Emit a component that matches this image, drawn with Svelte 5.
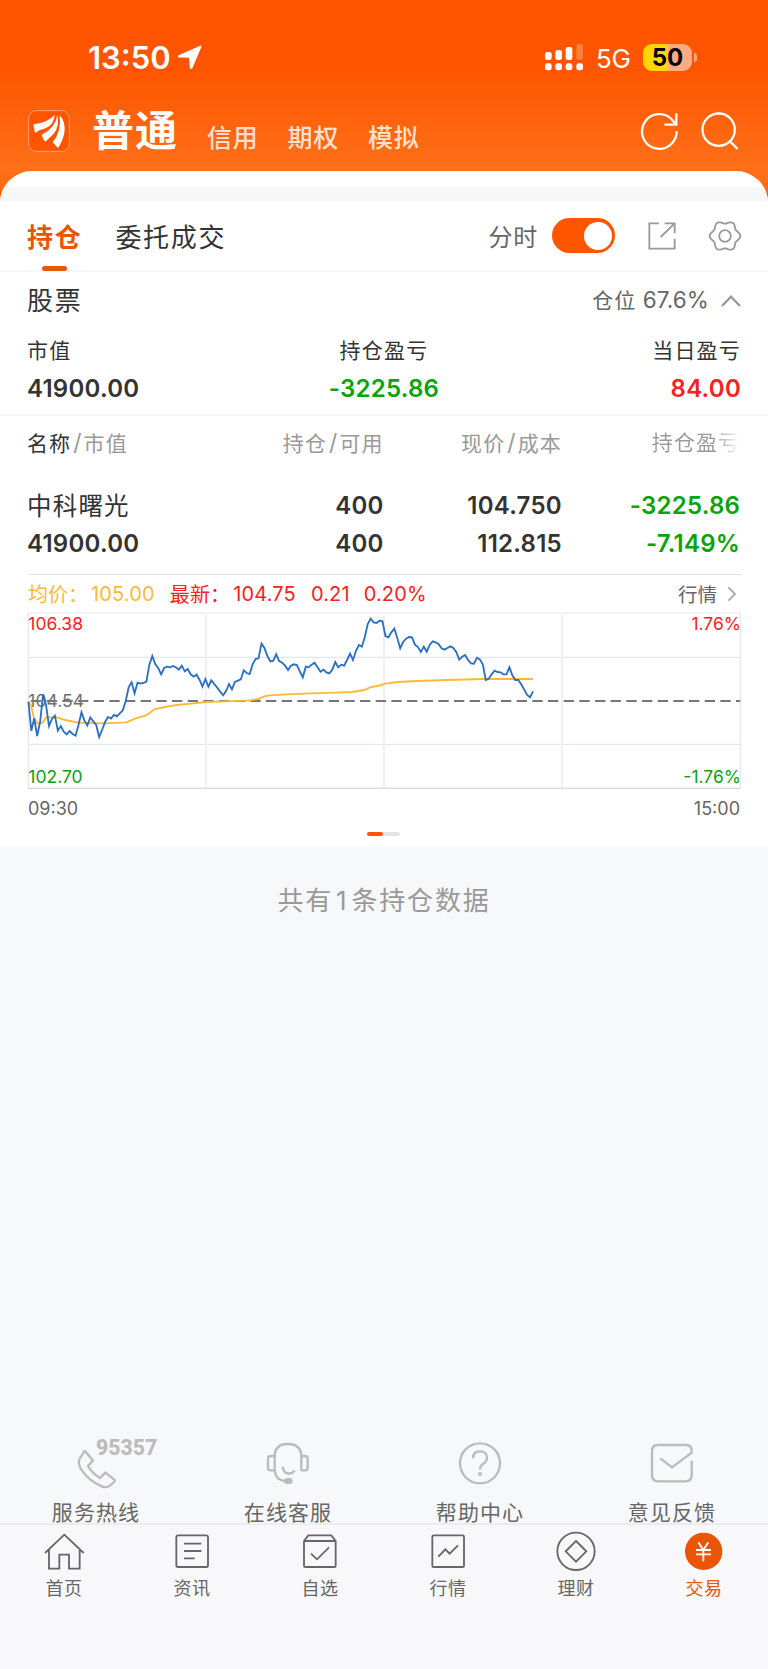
<script>
  // 顶部账户类型
  const accounts = ['信用', '期权', '模拟'];

  // 资产汇总
  const summary = [
    { label: '市值', value: '41900.00', tone: '' },
    { label: '持仓盈亏', value: '-3225.86', tone: 'down' },
    { label: '当日盈亏', value: '84.00', tone: 'up' },
  ];

  // 分时数据：每分钟一个点，数值为图内纵坐标
  const prices = [
    305, 392, 355, 408, 365, 283, 315, 378, 357, 347, 392, 378, 395, 403, 393, 402, 407, 375, 337,
    362, 376, 352, 364, 375, 411, 390, 366, 351, 356, 345, 349, 340, 331, 303, 262, 247, 280, 248,
    251, 249, 245, 194, 168, 192, 204, 223, 204, 200, 202, 198, 202, 209, 197, 214, 207, 223, 230,
    224, 239, 260, 237, 260, 241, 252, 263, 275, 286, 273, 252, 268, 246, 242, 238, 211, 219, 222,
    193, 177, 175, 131, 144, 168, 184, 182, 163, 183, 188, 197, 210, 197, 193, 195,
    214, 232, 200, 202, 194, 188, 202, 215, 209, 217, 220, 209, 186, 202, 194, 197, 180, 161, 180,
    153, 135, 140, 112, 72, 56, 67, 69, 62, 64, 108, 112, 97, 86, 113, 145, 126, 116, 111, 112,
    134, 141, 156, 140, 155, 135, 124, 127, 132, 145, 149, 144, 139, 144, 156, 179, 170, 165, 180,
    190, 191, 173, 178, 193, 240, 236, 223, 212, 216, 217, 223, 223, 202, 226, 240, 240, 253, 268,
    285, 292, 274,
  ];
  const step = (1539 - 25) / (prices.length - 1);
  const priceLine = prices.map((y, i) => `${(25 + i * step).toFixed(1)},${y}`).join(' ');

  // 均价线
  const average = [
    [27, 305], [34, 320], [42, 355], [52, 370], [65, 370], [72, 362], [78, 352], [112, 352],
    [135, 360], [165, 366], [180, 368], [250, 370], [320, 367], [345, 356], [378, 346], [405, 327],
    [435, 321], [470, 315], [520, 310], [560, 306], [620, 304], [690, 301], [715, 297], [732, 289],
    [750, 286], [800, 283], [870, 280], [950, 278], [995, 276], [1033, 270], [1050, 262],
    [1085, 255], [1095, 251], [1135, 246], [1190, 243], [1280, 240], [1390, 237], [1539, 237],
  ];
  const averageLine = average.map((p) => p.join(',')).join(' ');

  // 设置图标的齿轮轮廓
  const gear = Array.from({ length: 72 }, (_, i) => {
    const a = (i * Math.PI) / 36;
    const r = 41.5 + 4.5 * Math.cos(6 * a);
    return `${(48 + r * Math.cos(a)).toFixed(1)},${(48 + r * Math.sin(a)).toFixed(1)}`;
  }).join(' ');

  const services = [
    { icon: 'phone', label: '服务热线' },
    { icon: 'headset', label: '在线客服' },
    { icon: 'help', label: '帮助中心' },
    { icon: 'mail', label: '意见反馈' },
  ];

  const tabs = [
    { icon: 'home', label: '首页' },
    { icon: 'news', label: '资讯' },
    { icon: 'pick', label: '自选' },
    { icon: 'market', label: '行情' },
    { icon: 'wealth', label: '理财' },
    { icon: 'trade', label: '交易' },
  ];
</script>

<div class="app">
  <header>
    <div class="status">
      <span class="clock">13:50</span>
      <svg class="locate" viewBox="0 0 76 76"><path d="M70 2Q75 0 74 6L47 70Q42 77 39 69L37 41Q37 39 35 39L8 38Q-2 36 5 31Z" /></svg>
      <span class="space"></span>
      <svg class="signal" viewBox="0 0 114 81">
        <rect x="0" y="24" width="20" height="24" rx="7" />
        <rect x="31" y="18" width="20" height="30" rx="7" />
        <rect x="62" y="9" width="20" height="39" rx="7" />
        <rect x="94" y="0" width="20" height="48" rx="7" opacity=".25" />
        <rect x="0" y="58" width="20" height="21" rx="7" />
        <rect x="31" y="58" width="20" height="21" rx="7" />
        <rect x="62" y="58" width="20" height="21" rx="7" />
        <rect x="94" y="58" width="20" height="21" rx="7" />
      </svg>
      <span class="network">5G</span>
      <span class="battery">50</span>
      <span class="battery-cap"></span>
    </div>
    <nav class="accounts">
      <svg class="logo" viewBox="0 0 126 126">
        <rect x="2" y="2" width="122" height="122" rx="23" />
        <path d="M80 14Q60 38 16 43L21 69Q34 59 53 55Q78 44 80 14Z" />
        <path d="M88 15Q83 54 41 74Q44 86 52 95L76 73Q96 49 88 15Z" />
        <path d="M95 16Q101 65 74 97L90 114Q103 96 109 70Q114 36 95 16Z" />
      </svg>
      <h1>普通</h1>
      {#each accounts as account}
        <span class="account">{account}</span>
      {/each}
      <span class="space"></span>
      <svg class="refresh" viewBox="0 0 114 114"><path d="M107 57A52 52 0 1 1 94 24L106 38M106 4V38H70" /></svg>
      <svg class="search" viewBox="0 0 114 114"><circle cx="53" cy="53" r="48.5" /><path d="M86 87L110 111" /></svg>
    </nav>
  </header>

  <main>
    <div class="strip"></div>
    <section class="toolbar">
      <span class="tab active">持仓</span>
      <span class="tab">委托成交</span>
      <span class="space"></span>
      <span class="minute">分时</span>
      <span class="switch"><i></i></span>
      <svg class="share" viewBox="0 0 84 84"><path d="M33 4H4V80H80V50M50 4H80V34M80 4L38 45" /></svg>
      <svg class="gear" viewBox="0 0 96 96"><polygon points={gear} /><circle cx="48" cy="48" r="17.5" /></svg>
    </section>

    <section class="stock">
      <div class="stock-head">
        <span class="title">股票</span>
        <span class="ratio">仓位 <b>67.6%</b></span>
        <svg class="chevron" viewBox="0 0 60 36"><path d="M3 33L30 5L57 33" /></svg>
      </div>
      <div class="summary">
        {#each summary as item}
          <div>
            <span class="label">{item.label}</span>
            <span class="num {item.tone}">{item.value}</span>
          </div>
        {/each}
      </div>
    </section>

    <section class="holding">
      <div class="grid head">
        <span><em>名称</em><i>/</i>市值</span>
        <span>持仓<i>/</i>可用</span>
        <span>现价<i>/</i>成本</span>
        <span class="fade">持仓盈亏</span>
      </div>
      <div class="grid row">
        <span class="name">中科曙光</span>
        <span class="num">400</span>
        <span class="num">104.750</span>
        <span class="num down">-3225.86</span>
      </div>
      <div class="grid row">
        <span class="num">41900.00</span>
        <span class="num">400</span>
        <span class="num">112.815</span>
        <span class="num down">-7.149%</span>
      </div>
    </section>

    <section class="minute-chart">
      <div class="legend">
        <span class="avg">均价：</span><span class="avg value">105.00</span>
        <span class="latest">最新：</span><span class="latest value">104.75</span>
        <span class="latest diff">0.21</span><span class="latest">0.20%</span>
        <span class="space"></span>
        <span class="more">行情</span>
        <svg class="arrow" viewBox="0 0 30 48"><path d="M4 4L24 24L4 44" /></svg>
      </div>
      <svg class="chart" viewBox="24 36 2142 534">
        <g class="frame">
          <path d="M24 39H2163M24 172H2163M24 433H2163" />
          <path d="M25 39V565M2161 39V565" />
          <path class="wide" d="M558 45V562M1092 45V562M1626 45V562" />
          <path class="base" d="M24 565H2163" />
        </g>
        <text class="axis mid" x="25" y="320">104.54</text>
        <path class="dash" d="M33 303H2161" />
        <polyline class="average" points={averageLine} />
        <polyline class="price" points={priceLine} />
        <text class="axis red" x="25" y="90">106.38</text>
        <text class="axis green" x="25" y="549">102.70</text>
        <text class="axis red" x="2163" y="90" text-anchor="end">1.76%</text>
        <text class="axis green" x="2163" y="549" text-anchor="end">-1.76%</text>
      </svg>
      <div class="times"><span>09:30</span><span>15:00</span></div>
      <div class="pager"><i></i></div>
    </section>
  </main>

  <p class="total">共有<span>1</span>条持仓数据</p>

  <section class="services">
    {#each services as item}
      <div class="service">
        <svg viewBox="0 0 390 195">
          {#if item.icon === 'phone'}
            <path d="M163 64L186 92L171 108Q184 130 207 144L223 128L250 149Q253 152 249 156L238 166Q226 175 212 169Q172 152 150 117Q139 98 147 84L159 66Q161 62 163 64Z" />
            <text x="195" y="74" textLength="184" lengthAdjust="spacingAndGlyphs">95357</text>
          {:else if item.icon === 'headset'}
            <path d="M155 120V80Q155 42 194 42Q235 42 235 80V122M155 78H143Q135 78 135 86V113Q135 121 143 121H155M235 78H246Q254 78 254 86V113Q254 121 246 121H235M155 120Q157 150 185 153" />
            <path d="M179 110Q181 130 197 131Q209 131 215 122" />
            <rect x="183" y="144" width="26" height="18" rx="9" />
          {:else if item.icon === 'help'}
            <circle cx="195" cy="100" r="60" />
            <path d="M174 85Q174 64 195 64Q216 64 216 83Q216 94 205 101Q195 107 195 118" />
            <rect x="189" y="126" width="12" height="12" rx="6" />
          {:else}
            <path d="M254 92V136Q254 154 236 154H153Q135 154 135 136V63Q135 45 153 45H236Q254 45 254 63V68L195 112L160 85" />
          {/if}
        </svg>
        <span>{item.label}</span>
      </div>
    {/each}
  </section>

  <footer>
    {#each tabs as tab}
      <div class="nav" class:on={tab.icon === 'trade'}>
        <svg viewBox="0 0 126 126">
          {#if tab.icon === 'home'}
            <path d="M6 69L64 14L122 69M18 60V116H49V74H78V116H110V60" />
          {:else if tab.icon === 'news'}
            <rect x="16" y="16" width="95" height="95" rx="5" />
            <path d="M39 41H91M39 63H91M39 85H71" />
          {:else if tab.icon === 'pick'}
            <path d="M15 33L28 16H97L110 33V107Q110 111 106 111H19Q15 111 15 107ZM15 33H110M36 71L54 88L90 52" />
          {:else if tab.icon === 'market'}
            <rect x="16" y="16" width="95" height="95" rx="4" />
            <path d="M34 80L55 58L68 71L93 46" />
          {:else if tab.icon === 'wealth'}
            <circle cx="63" cy="64" r="56" />
            <path d="M63 33L94 64L63 95L32 64Z" />
          {:else}
            <circle cx="62" cy="64" r="56" />
            <path d="M46 37L61 60L76 37M61 60V94M39 60H84M39 73H84" />
          {/if}
        </svg>
        <span>{tab.label}</span>
      </div>
    {/each}
  </footer>
</div>

<style>
  :global(body) {
    background: #f6f8fa;
  }

  .app {
    width: 768px;
    height: 1669px;
    display: flex;
    flex-direction: column;
    overflow: hidden;
    font-family: Inter, 'Noto Sans CJK SC', sans-serif;
    color: #333;
    background: linear-gradient(#f50 70px, #ff7019 170px, #ff6a10 190px, #f50 200px, #f50 230px, #f6f8fa 230px);
  }

  svg {
    flex: none;
    fill: none;
    overflow: visible;
  }

  .space {
    flex: 1;
  }

  header {
    height: 171px;
    color: #fff;
  }

  .status {
    height: 58px;
    padding: 28px 71px 0 88px;
    display: flex;
    align-items: center;
  }

  .clock {
    width: 89px;
    font-size: 31px;
    font-weight: 600;
  }

  .locate {
    width: 25px;
    height: 25px;
    fill: #fff;
  }

  .signal {
    width: 38px;
    height: 27px;
    margin-right: 13px;
    fill: #fff;
  }

  .network {
    width: 47px;
    font-size: 26px;
    line-height: 30px;
    padding-top: 3px;
    box-sizing: border-box;
    letter-spacing: -0.3px;
  }

  .battery {
    width: 49px;
    height: 27px;
    border-radius: 9px;
    background: linear-gradient(90deg, #ffd600 51%, #ffaa80 51%);
    color: #000;
    font-size: 24px;
    font-weight: 700;
    line-height: 27px;
    text-align: center;
  }

  .battery-cap {
    width: 3px;
    height: 9px;
    margin-left: 2px;
    border-radius: 0 4px 4px 0;
    background: #ffaa80;
  }

  .accounts {
    height: 85px;
    padding: 5px 29px 0 28px;
    box-sizing: border-box;
    display: flex;
    align-items: center;
  }

  .logo {
    width: 42px;
    height: 42px;
    fill: #fff;
  }

  .logo rect {
    fill: #f50;
    stroke: #ffa070;
    stroke-width: 3;
  }

  h1 {
    width: 115px;
    margin: 0 0 0 22px;
    font-size: 42px;
    font-weight: 600;
    line-height: 58px;
    letter-spacing: 1px;
  }

  .account {
    width: 80.5px;
    padding-top: 10px;
    font-size: 25px;
    font-weight: 500;
    letter-spacing: 0.8px;
    color: #ffe0cf;
  }

  .refresh,
  .search {
    width: 38px;
    height: 38px;
    stroke: #fff;
    stroke-width: 7;
  }

  .refresh {
    margin-right: 22px;
  }

  main {
    height: 675px;
    flex: none;
    border-radius: 32px 32px 0 0;
    background: #fff;
    overflow: hidden;
  }

  .strip {
    height: 14px;
    margin-top: 16px;
    background: #f6f7f9;
  }

  .toolbar {
    height: 71px;
    box-sizing: border-box;
    padding: 0 27px;
    display: flex;
    align-items: center;
    border-bottom: 2px solid #f7f7f8;
  }

  .tab {
    position: relative;
    margin-right: 34px;
    padding-top: 4px;
    font-size: 26px;
    letter-spacing: 1.7px;
    line-height: 64px;
  }

  .active {
    margin-right: 33px;
    font-weight: 600;
    color: #ea5504;
  }

  .active::after {
    content: '';
    position: absolute;
    left: 15px;
    bottom: -1px;
    width: 25px;
    height: 5px;
    border-radius: 2.5px;
    background: #ea5504;
  }

  .minute {
    margin-right: 14px;
    font-size: 24px;
    letter-spacing: 0.8px;
    color: #666;
  }

  .switch {
    width: 63px;
    height: 35px;
    padding: 3.5px;
    box-sizing: border-box;
    border-radius: 18px;
    background: #f50;
    display: flex;
    justify-content: flex-end;
  }

  .switch i {
    width: 28px;
    height: 28px;
    border-radius: 50%;
    background: #fff;
  }

  .share {
    width: 28px;
    height: 28px;
    margin: 0 33px 0 33px;
    stroke: #999;
    stroke-width: 5.5;
  }

  .gear {
    width: 32px;
    height: 32px;
    stroke: #999;
    stroke-width: 5.5;
  }

  .stock {
    height: 144px;
    box-sizing: border-box;
    padding: 0 27px;
    border-bottom: 2px solid #f6f6f7;
  }

  .stock-head {
    height: 53px;
    margin-bottom: 5px;
    display: flex;
    align-items: center;
  }

  .title {
    flex: 1;
    font-size: 26px;
    letter-spacing: 1.7px;
  }

  .ratio {
    font-size: 21px;
    letter-spacing: 0.8px;
    color: #666;
  }

  .ratio b {
    font-size: 22.5px;
    font-weight: 400;
    letter-spacing: 0.1px;
  }

  .chevron {
    width: 20px;
    height: 12px;
    margin: 4px 0 0 12px;
    stroke: #999;
    stroke-width: 7;
  }

  .summary {
    display: grid;
    grid-template-columns: repeat(3, 1fr);
  }

  .summary div {
    display: flex;
    flex-direction: column;
  }

  .summary div:nth-child(2) {
    align-items: center;
  }

  .summary div:nth-child(3) {
    align-items: flex-end;
  }

  .label {
    font-size: 21px;
    line-height: 42px;
    letter-spacing: 1.2px;
  }

  .num {
    font-size: 24px;
    font-weight: 600;
    line-height: 34px;
    letter-spacing: 0.25px;
  }

  .down {
    color: #0aa30a;
  }

  .up {
    color: #f52222;
  }

  .holding {
    height: 158px;
    padding: 0 29px 0 27px;
  }

  .grid {
    display: grid;
    grid-template-columns: repeat(4, 178.3px);
    text-align: right;
  }

  .grid > :first-child {
    text-align: left;
  }

  .head {
    height: 71px;
    font-size: 21px;
    line-height: 54px;
    letter-spacing: 1.1px;
    color: #999;
  }

  .head em {
    font-style: normal;
    color: #333;
  }

  .head i {
    font-style: normal;
    font-size: 23px;
    margin: 0 1px 0 2px;
  }

  .fade {
    background: linear-gradient(90deg, #999 85%, #fff);
    background-clip: text;
    color: transparent;
  }

  .row {
    height: 38px;
    align-items: center;
  }

  .name {
    font-size: 24.5px;
    line-height: 38px;
    letter-spacing: 1.2px;
  }

  .minute-chart {
    padding: 0 26px 0 28px;
  }

  .legend {
    height: 37px;
    display: flex;
    align-items: center;
    border-top: 1px solid #e3e5ee;
    font-size: 20px;
  }

  .avg {
    color: #fdb935;
  }

  .latest {
    color: #f52222;
    letter-spacing: 0.15px;
  }

  .value {
    margin: 0 15px 0 3px;
    letter-spacing: 0.15px;
  }

  .diff {
    margin-right: 14px;
  }

  .more {
    color: #666;
    font-size: 19.5px;
  }

  .arrow {
    width: 10px;
    height: 16px;
    margin: 0 5px 0 10px;
    stroke: #aaa;
    stroke-width: 5.5;
  }

  .chart {
    display: block;
    width: 714px;
    height: 178px;
  }

  .frame {
    stroke: #e3e6ee;
    stroke-width: 3.5;
  }

  .wide {
    stroke: #edf0f5;
    stroke-width: 6;
  }

  .base {
    stroke: #d5d8e0;
  }

  .dash {
    stroke: #777;
    stroke-width: 6;
    stroke-dasharray: 31 16;
  }

  .average,
  .price {
    stroke-width: 5.5;
    stroke: #fdb935;
  }

  .price {
    stroke: #2b6fc0;
  }

  .axis {
    font-size: 52.5px;
  }

  .mid {
    fill: #707070;
  }

  .red {
    fill: #f52222;
  }

  .green {
    fill: #0aa30a;
  }

  .times {
    display: flex;
    justify-content: space-between;
    padding: 1px 2px 0 0;
    font-size: 18px;
    line-height: 36px;
    color: #666;
  }

  .pager {
    width: 33px;
    height: 4px;
    margin: 5px auto 0 339px;
    border-radius: 2px;
    background: #e4e4e4;
  }

  .pager i {
    display: block;
    width: 16px;
    height: 4px;
    border-radius: 2px;
    background: #f50;
  }

  .total {
    margin: 0;
    padding-top: 2px;
    flex: 1;
    background: #f6f8fa;
    text-align: center;
    font-size: 26px;
    line-height: 106px;
    letter-spacing: 1.8px;
    color: #999;
  }

  .total span {
    margin: 0 3px;
  }

  .services {
    height: 93px;
    display: grid;
    grid-template-columns: repeat(4, 1fr);
    background: #f6f8fa;
  }

  .service {
    display: flex;
    flex-direction: column;
    align-items: center;
    color: #666;
    font-size: 21px;
    line-height: 36px;
    letter-spacing: 1.1px;
  }

  .service svg {
    width: 130px;
    height: 65px;
    stroke: #bbb;
    stroke-width: 7;
  }

  .service rect,
  .service text {
    fill: #bbb;
    stroke: none;
  }

  .service text {
    font-family: Roboto, sans-serif;
    font-size: 65px;
    font-weight: 800;
    letter-spacing: 0;
  }

  footer {
    height: 146px;
    box-sizing: border-box;
    padding-top: 5px;
    display: grid;
    grid-template-columns: repeat(6, 1fr);
    border-top: 2px solid #ececf0;
    background: #f8f8fb;
  }

  .nav {
    display: flex;
    flex-direction: column;
    align-items: center;
    font-size: 18px;
    line-height: 33px;
    letter-spacing: 0.6px;
    color: #666;
  }

  .nav svg {
    width: 42px;
    height: 42px;
    stroke: #666;
    stroke-width: 5.5;
  }

  .on {
    color: #ea5504;
  }

  .on svg {
    stroke: #fff;
  }

  .on circle {
    fill: #ea5504;
    stroke: none;
  }
</style>
